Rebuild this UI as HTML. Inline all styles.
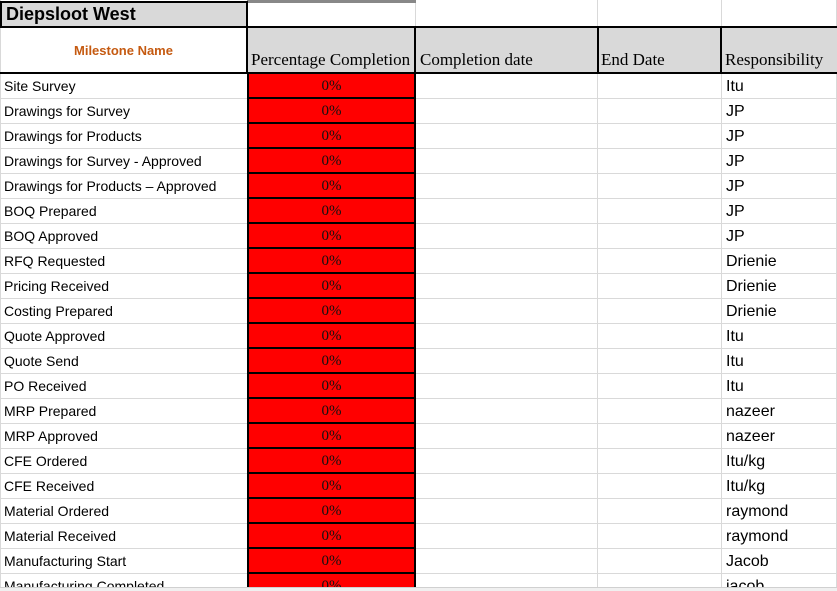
<!DOCTYPE html>
<html><head><style>
body{margin:0;width:837px;height:591px;overflow:hidden;background:#fff;position:relative;font-family:"Liberation Sans",sans-serif}
div{position:absolute;box-sizing:border-box}
#clip{left:0;top:0;width:837px;height:587px;overflow:hidden}
.vl{width:1px;background:#d9d9d9}
.hl{height:1px;background:#d9d9d9;left:0;width:837px}
.t{font-size:14px;color:#000;white-space:nowrap;left:4px}
.r{left:726px;font-size:16px}
.red{left:247px;width:169px;background:#f00;border:2px solid #000;border-top:none;text-align:center;font-size:15px;font-family:"Liberation Serif",serif;color:#111}
.h{font-family:"Liberation Serif",serif;font-size:17px;top:50px;white-space:nowrap}
</style></head><body>
<div id="clip">
<div class="vl" style="left:415px;top:0;height:587px"></div>
<div class="vl" style="left:597px;top:0;height:587px"></div>
<div class="vl" style="left:721px;top:0;height:587px"></div>
<div class="vl" style="left:836px;top:0;height:587px"></div>
<div class="vl" style="left:0;top:0;height:587px"></div>
<div style="left:247px;top:0;width:169px;height:3px;background:#888"></div>
<div style="left:0;top:1px;width:248px;height:27px;background:#d9d9d9;border:2px solid #000"></div>
<div style="left:6px;top:4px;font-weight:bold;font-size:18px">Diepsloot West</div>
<div style="left:247px;top:27px;width:590px;height:47px;background:#d9d9d9"></div>
<div style="left:0;top:26px;width:837px;height:2px;background:#000"></div>
<div style="left:0;top:72px;width:837px;height:2px;background:#000"></div>
<div style="left:246px;top:26px;width:2px;height:48px;background:#000"></div>
<div style="left:414px;top:26px;width:2px;height:48px;background:#000"></div>
<div style="left:597px;top:26px;width:2px;height:48px;background:#000"></div>
<div style="left:720px;top:26px;width:2px;height:48px;background:#000"></div>
<div style="left:0;top:43px;width:247px;text-align:center;color:#c55a11;font-weight:bold;font-size:13px">Milestone Name</div>
<div class="h" style="left:251px">Percentage Completion</div>
<div class="h" style="left:420px">Completion date</div>
<div class="h" style="left:601px">End Date</div>
<div class="h" style="left:725px">Responsibility</div>
<div id="rows"></div>
</div>
<script>
var d=[["Site Survey","Itu"],["Drawings for Survey","JP"],["Drawings for Products","JP"],["Drawings for Survey - Approved","JP"],["Drawings for Products – Approved","JP"],["BOQ Prepared","JP"],["BOQ Approved","JP"],["RFQ Requested","Drienie"],["Pricing Received","Drienie"],["Costing Prepared","Drienie"],["Quote Approved","Itu"],["Quote Send","Itu"],["PO Received","Itu"],["MRP Prepared","nazeer"],["MRP Approved","nazeer"],["CFE Ordered","Itu/kg"],["CFE Received","Itu/kg"],["Material Ordered","raymond"],["Material Received","raymond"],["Manufacturing Start","Jacob"],["Manufacturing Completed","jacob"]];
var h="";
d.forEach(function(r,i){var y=74+i*25;
h+='<div class="hl" style="top:'+(y+24)+'px"></div>';
h+='<div class="red" style="top:'+y+'px;height:25px;line-height:25px">0%</div>';
h+='<div class="t" style="top:'+(y+4)+'px">'+r[0]+'</div>';
h+='<div class="r" style="top:'+(y+4)+'px">'+r[1]+'</div>';});
document.getElementById("rows").outerHTML=h;
</script>
<div style="left:0;top:587px;width:837px;height:4px;background:#f0f0f0;border-top:1px solid #d0d0d0"></div>
</body></html>
